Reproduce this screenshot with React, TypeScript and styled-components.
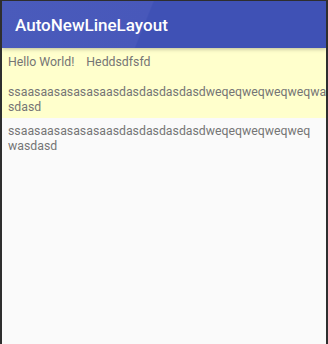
import React from 'react';
import styled, { createGlobalStyle } from 'styled-components';

const GlobalStyle = createGlobalStyle`
  html, body {
    margin: 0;
    padding: 0;
    background: #2e2e2e;
  }
  body {
    font-family: Roboto, "Noto Sans", sans-serif;
  }
`;

const Frame = styled.div`
  width: 324px;
  height: 343px;
  margin: 1px 2px 0 2px;
  background: #fafafa;
  display: flex;
  flex-direction: column;
  overflow: hidden;
`;

const AppBar = styled.header`
  height: 47px;
  flex-shrink: 0;
  display: flex;
  align-items: center;
  padding-left: 13px;
  background: linear-gradient(112deg, #4a5bbb 0%, #4858ba 44%, #3f51b5 44.5%, #3f51b5 100%);
  color: #ffffff;
  font-size: 17px;
  font-weight: 500;
  position: relative;
  z-index: 1;
  box-shadow: 0 1px 4px rgba(0, 0, 0, 0.28);
`;

const WrapBox = styled.div`
  background: #ffffcc;
  display: flex;
  flex-wrap: wrap;
  column-gap: 12px;
  row-gap: 15px;
  padding: 7px 0 3px 6px;
  overflow: hidden;
`;

const Label = styled.div<{ $wide?: boolean }>`
  font-size: 12.3px;
  line-height: 15px;
  color: #757575;
  white-space: nowrap;
  ${(p) => (p.$wide ? 'width: 100%;' : '')}
`;

const Line = styled.div`
  white-space: nowrap;
`;

const Plain = styled.div`
  font-size: 12.3px;
  line-height: 15px;
  color: #757575;
  padding: 6px 8px 0 6px;
`;

export default function App() {
  return (
    <>
      <GlobalStyle />
      <Frame>
        <AppBar>AutoNewLineLayout</AppBar>
        <WrapBox>
          <Label>Hello World!</Label>
          <Label>Heddsdfsfd</Label>
          <Label $wide>
            <Line>ssaasaasasasasaasdasdasdasdasdweqeqweqweqweqwa</Line>
            <Line>sdasd</Line>
          </Label>
        </WrapBox>
        <Plain>
          <Line>ssaasaasasasasaasdasdasdasdasdweqeqweqweqweq</Line>
          <Line>wasdasd</Line>
        </Plain>
      </Frame>
    </>
  );
}
